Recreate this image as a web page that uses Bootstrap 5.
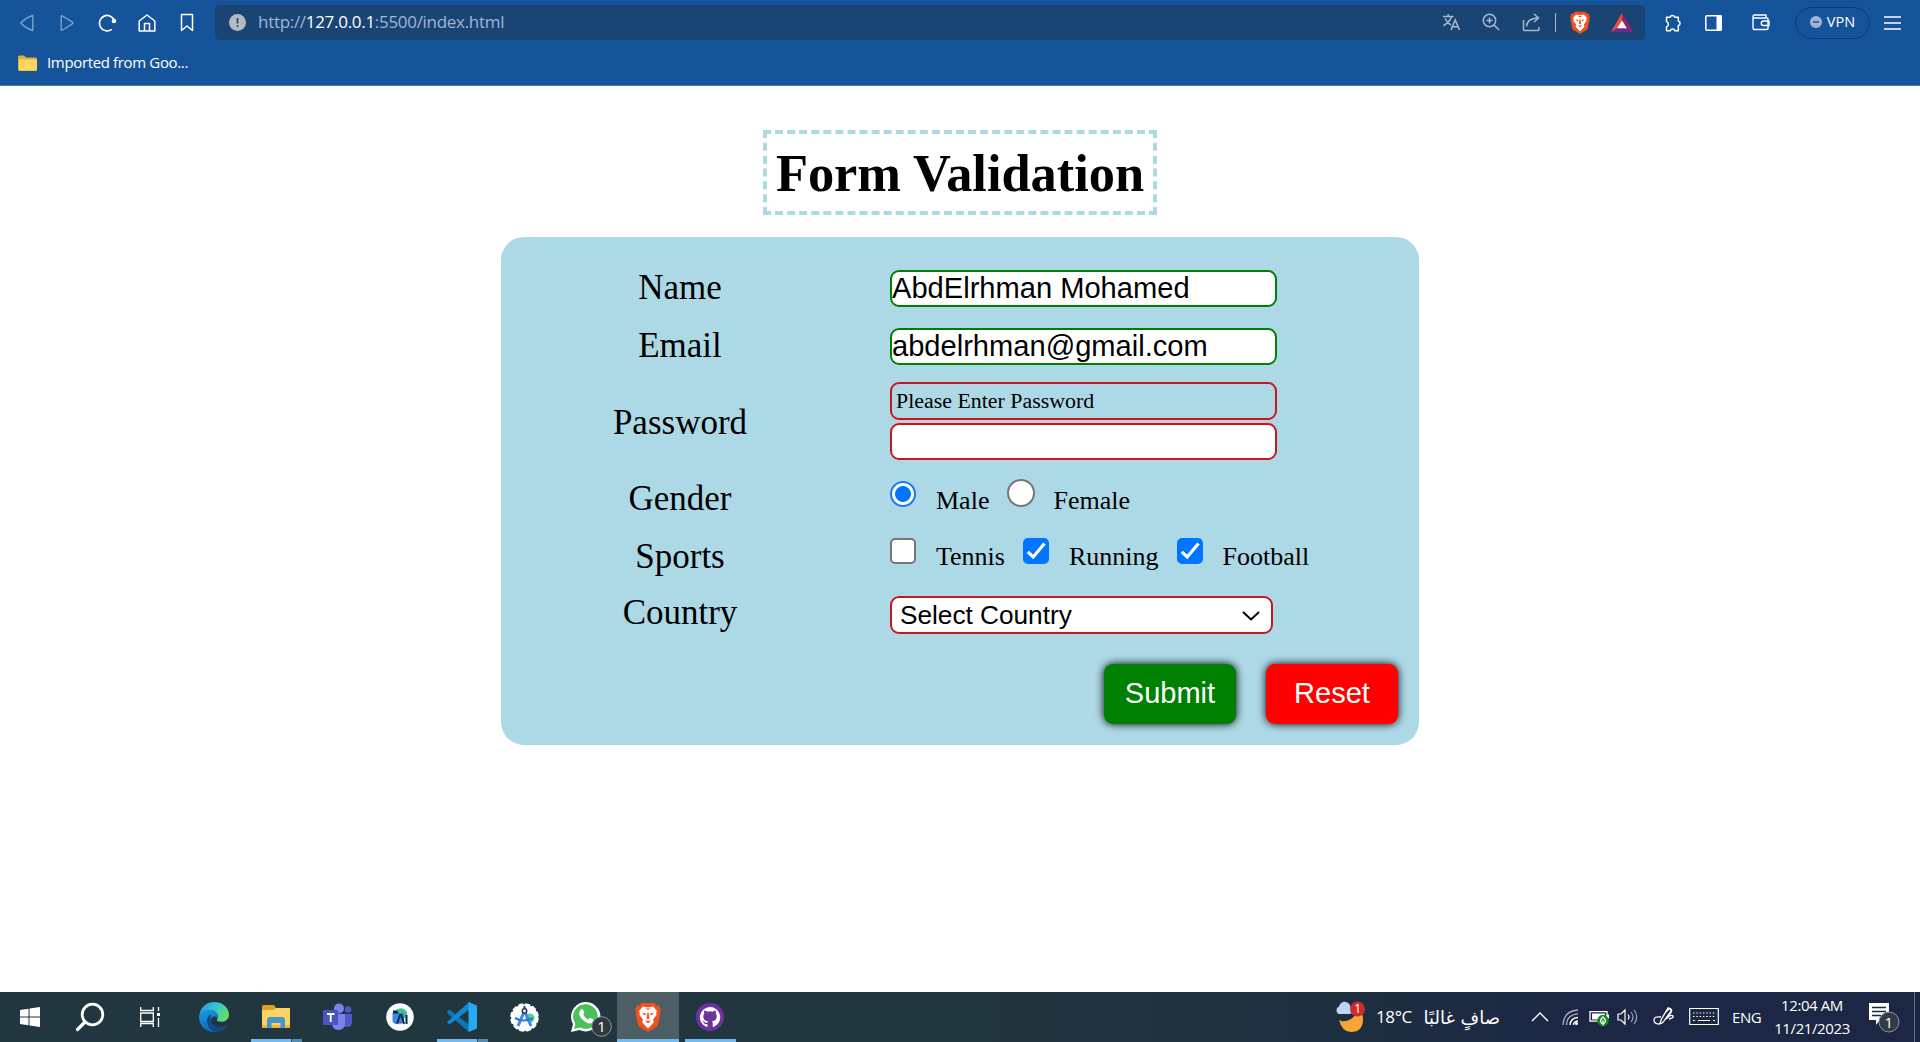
<!DOCTYPE html>
<html lang="en">
<head>
<meta charset="utf-8">
<title>Form Validation</title>
<link href="https://cdn.jsdelivr.net/npm/bootstrap@5.3.0/dist/css/bootstrap.min.css" rel="stylesheet">
<style>
  body { width: 1920px; height: 1042px; overflow: hidden; background: #fff; color: #000; font-family: "Open Sans", "Noto Sans", sans-serif; }
  svg { display: block; flex: none; }
  /* browser chrome */
  .chrome { height: 86px; background: #15539a; border-bottom: 1px solid #4a7cb5; color: #fff; flex: none; }
  .tools { height: 45px; padding-left: 7px; }
  .slot { width: 40px; flex: none; display: flex; justify-content: center; align-items: center; }
  .address { width: 1430px; height: 35px; margin: 0 8px 0 8px; background: #1a4474; border-radius: 5px; padding: 0 1px 1px 14px; flex: none; }
  .url { font-size: 17px; color: #9db7d6; margin-left: 12px; white-space: nowrap; letter-spacing: -.3px; line-height: 24px; }
  .url b { font-weight: 400; color: #fff; }
  .vpn { width: 75px; height: 32px; border: 1px solid #0d3d78; border-radius: 16px; margin-left: 14px; font-size: 14.5px; padding-bottom: 1px; flex: none; }
  .bookmarks { height: 35px; padding-left: 18px; font-size: 15px; }
  .bookmarks span { letter-spacing: -.35px; margin-left: 10px; }
  /* page */
  .page { flex: 1; font-family: "Liberation Serif", serif; }
  .page-title { margin: 44px 0 22px; height: 85px; width: 394px; border: 4px dashed #add8e6; font-size: 52.4px; font-weight: 700; line-height: 79px; text-align: center; white-space: nowrap; }
  .panel { width: 918px; height: 508px; background: #add8e6; border-radius: 23px; padding-top: 20px; }
  .line { height: 58px; }
  .line-tall { height: 95px; }
  .caption { width: 358px; font-size: 35px; margin-right: 31px; line-height: 40px; flex: none; }
  .field { width: 387px; height: 37px; border: 2px solid green; border-radius: 9px; padding: 0; font: 29.1px "Liberation Sans", sans-serif; color: #000; background: #fff; outline: 0; display: block; }
  .bad { border-color: #c8161d; }
  .notice { width: 387px; height: 38px; border: 2px solid #c8161d; border-radius: 9px; font-size: 21.900px; line-height: 34px; padding-left: 4px; margin-bottom: 3px; box-shadow: 0 2px 1px -1px #eebcc8; }
  .choices { font-size: 26px; line-height: 30px; }
  .choices label { margin: 0 18px 0 20px; }
  .choices input { appearance: none; width: 26px; height: 26px; margin: 0; border: 2px solid #767676; border-radius: 5px; background: #fff; flex: none; }
  .choices input[type=radio] { border-radius: 50%; }
  .choices input[type=radio]:checked { border-color: #1a78f0; background: radial-gradient(circle, #0075ff 7.500px, #fff 8.300px); }
  .choices input[type=checkbox]:checked { border-color: #0075ff; background: #0075ff url("data:image/svg+xml,%3csvg xmlns='http://www.w3.org/2000/svg' viewBox='0 0 26 26'%3e%3cpath fill='none' stroke='%23fff' stroke-width='3.200' d='M4.800 13.800l5.400 5.200L21.500 5.500'/%3e%3c/svg%3e") center / 26px 26px border-box; }
  .choices .over { width: 28px; height: 28px; margin-top: -1px; }
  .choices .over + label { margin-left: 18px; }
  .country { width: 383px; height: 38px; border: 2px solid #c8161d; border-radius: 9px; font: 26.2px "Liberation Sans", sans-serif; color: #000; padding: 0 0 0 8px; background-color: #fff; background-size: 18px 10px; background-position: right 11px top 13px;
    background-image: url("data:image/svg+xml,%3csvg xmlns='http://www.w3.org/2000/svg' viewBox='0 0 18 10'%3e%3cpath fill='none' stroke='%23000' stroke-width='2' d='M1 1l8 7.500 8-7.500'/%3e%3c/svg%3e"); }
  .act { width: 132px; height: 60px; border: 0; border-radius: 9px; font: 29px/58px "Liberation Sans", sans-serif; color: #fff; padding: 0 0 2px; box-shadow: 0 0 8px #000; }
  .go { background: green; }
  .clear { background: red; }
  /* taskbar */
  .taskbar { height: 50px; background: linear-gradient(90deg, #22363f 0%, #22363f 50%, #1e2f40 70%, #1b2744 82%, #1b2744 100%); color: #fff; flex: none; }
  .task { width: 62px; height: 50px; flex: none; display: flex; align-items: center; justify-content: center; position: relative; }
  .task.wide { width: 60px; }
  .task.on::after { content: ""; position: absolute; bottom: 0; left: 6px; width: 51px; height: 3px; background: #76b9ed; }
  .task.multi::after { background: linear-gradient(90deg, #76b9ed 40px, #3a5263 40px 41px, #5689af 41px); }
  .task.now { background: #4e5e65; }
  .task.now::after { left: 0; width: 62px; }
  .tray { font-size: 15px; letter-spacing: -.4px; }
  .clock { width: 84px; font-size: 15px; line-height: 23px; text-align: center; white-space: nowrap; }
  .arabic { font-family: "DejaVu Sans", sans-serif; font-size: 18px; letter-spacing: 0; white-space: nowrap; }
</style>
<script src="https://cdn.jsdelivr.net/npm/bootstrap@5.3.0/dist/js/bootstrap.bundle.min.js"></script>
</head>
<body class="d-flex flex-column">
<svg width="0" height="0" class="position-absolute">
  <symbol id="lion" viewBox="0 0 26 30">
    <path d="M6.500 1h13l2.500 2.600 2.200-.2L25.800 8l-.8 2.500.500 2-3 11.500L13 30 3.500 24 .5 12.500l.5-2L.2 8l1.600-4.600 2.200.2z" fill="#f1501f"/>
    <path d="M8 4.500l5 1 5-1 4 4.600-.8 2.200.3 1.700-3.500 4.600.8 3L13 26.500 7.200 20.600l.8-3L4.500 13l.3-1.700L4 9.100z" fill="#fff"/>
    <path d="M7 10.800l4 .8-1 2.200zM19 10.800l-4 .8 1 2.200zM10.500 18l2.500 1.200 2.500-1.200-1.500 3h-2zM12.200 11h1.600l.5 5.500-1.300.8-1.300-.8zM10 6.500h6l-3 1.500z" fill="#f1501f"/>
  </symbol>
</svg>

<header class="chrome">
  <div class="tools d-flex align-items-center">
    <span class="slot"><svg width="16" height="18" fill="none" stroke="#7ba3d2" stroke-width="1.400" stroke-linejoin="round"><path d="M13.800 1.500v15q-7-2-12-7.500 5-5.500 12-7.500z"/></svg></span>
    <span class="slot"><svg width="16" height="18" fill="none" stroke="#7ba3d2" stroke-width="1.400" stroke-linejoin="round"><path d="M2.200 2.500q0-1.200 1.200-.5l10 6.200q1 .8 0 1.600l-10 6.200q-1.200.7-1.200-.5z"/></svg></span>
    <span class="slot"><svg width="20" height="20" fill="none" stroke="#fff" stroke-width="1.700"><path d="M14.800 16.300A7.700 7.700 0 1 1 17.500 8"/><circle cx="17" cy="8" r="2.300" fill="#fff" stroke="none"/></svg></span>
    <span class="slot"><svg width="18" height="18" fill="none" stroke="#fff" stroke-width="1.500" stroke-linejoin="round"><path d="M1.200 7L9 1l7.800 6v10H1.200zM6.500 17V9.500h5V17"/></svg></span>
    <span class="slot"><svg width="14" height="19" fill="none" stroke="#fff" stroke-width="1.500" stroke-linejoin="round"><path d="M1.500 1.500h11v16L7 13l-5.500 4.500z"/></svg></span>
    <div class="address d-flex align-items-center">
      <svg width="17" height="17"><circle cx="8.500" cy="8.500" r="8.500" fill="#b1bac5"/><path d="M8.500 4v5.500M8.500 11.200v1.700" stroke="#1a4474" stroke-width="1.700"/></svg>
      <span class="url">http://<b>127.0.0.1</b>:5500/index.html</span>
      <span class="slot ms-auto"><svg width="19" height="18" fill="none" stroke="#a9b9ce" stroke-width="1.500"><path d="M1 3.500h10.500M6.200 1v2.500M9.500 3.500Q8 9 1.500 12.500M3 5.500Q5 9.500 9 12M9 17l4.200-10 4.300 10M10.500 13.700h5.500"/></svg></span>
      <span class="slot"><svg width="18" height="18" fill="none" stroke="#a9b9ce" stroke-width="1.500"><circle cx="7.500" cy="7.500" r="6.200"/><path d="M12 12l5 5M4.500 7.500h6M7.500 4.500v6"/></svg></span>
      <span class="slot"><svg width="19" height="19" fill="none" stroke="#a9b9ce" stroke-width="1.500"><path d="M1.500 7v9.500q0 1 1 1H16q1 0 1-1V14M4.500 13.500Q5 5.500 15.500 5M12 1l4.500 4-4.500 4"/></svg></span>
      <span class="slot" style="width:8px"><svg width="1" height="19"><path d="M.5 0v19" stroke="#a9b9ce"/></svg></span>
      <span class="slot" style="width:41px"><svg width="20" height="23"><use href="#lion"/></svg></span>
      <span class="slot" style="width:44px"><svg width="22" height="19" viewBox="0 0 22 19"><path d="M11 0L0 19l11-6z" fill="#ee4f37"/><path d="M11 0l11 19-11-6z" fill="#9e1f63"/><path d="M0 19h22l-11-6.500z" fill="#662d91"/><path d="M11 7.500l4.800 7.800H6.200z" fill="#fff"/></svg></span>
    </div>
    <span class="slot"><svg width="18" height="18" viewBox="0 0 18 18" fill="none" stroke="#fff" stroke-width="1.500" stroke-linejoin="round"><path d="M2.500 3.200h3.700a2.300 2.300 0 0 1 4.500 0h3.600v3.900a2.250 2.250 0 0 1 0 4.400V16.800h-3.500a2.300 2.300 0 0 0-4.500 0H2.500v-3.900a2.800 2.800 0 0 0 0-5.300z"/></svg></span>
    <span class="slot"><svg width="17" height="16"><rect x=".8" y=".8" width="15.400" height="14.400" rx="1" fill="none" stroke="#fff" stroke-width="1.500"/><path d="M11.500 0h4q1.500 0 1.500 1.500v13q0 1.500-1.500 1.500h-4z" fill="#fff"/></svg></span>
    <span class="slot ms-2"><svg width="18" height="17" fill="none" stroke="#fff" stroke-width="1.400" stroke-linejoin="round"><path d="M1 2.700v11.300q0 1.500 1.500 1.500h12.500q1 0 1-1V5q0-1-1-1H2.500Q1 4 1 2.700 1 1 2.500 1H14v3M17 7h-5.500a2.200 2.200 0 0 0 0 4.500H17z"/></svg></span>
    <span class="vpn d-flex align-items-center justify-content-center"><svg width="12" height="12" style="margin-right:5px"><circle cx="6" cy="6" r="6" fill="#a6b2d4"/><path d="M3 6h6" stroke="#15539a" stroke-width="1.500"/></svg>VPN</span>
    <span class="slot" style="width:45px"><svg width="17" height="14" stroke="#fff" stroke-width="1.500"><path d="M0 1h17M0 7h17M0 13h17"/></svg></span>
  </div>
  <div class="bookmarks d-flex align-items-center">
    <svg width="19" height="16"><path d="M0 2q0-1.500 1.500-1.500H6L8 2.500h9.500Q19 2.500 19 4v10.500q0 1.500-1.500 1.500h-16Q0 16 0 14.500z" fill="#e5ad35"/><path d="M1 4.500h18v9.500q0 1.500-1.500 1.500h-15Q1 15.500 1 14z" fill="#ffd75e"/></svg>
    <span>Imported from Goo...</span>
  </div>
</header>

<main class="page d-flex flex-column align-items-center">
  <h1 class="page-title">Form Validation</h1>
  <form class="panel" autocomplete="off">
    <div class="line d-flex">
      <div class="caption text-center align-self-center pt-1">Name</div>
      <input class="field mt-auto mb-2" type="text" value="AbdElrhman Mohamed" aria-label="Name">
    </div>
    <div class="line d-flex">
      <div class="caption text-center align-self-center pt-1">Email</div>
      <input class="field mt-auto mb-2" type="text" value="abdelrhman@gmail.com" aria-label="Email">
    </div>
    <div class="line-tall d-flex">
      <div class="caption text-center align-self-center pt-1">Password</div>
      <div class="d-flex flex-column justify-content-end pb-2">
        <div class="notice">Please Enter Password</div>
        <input class="field bad" type="password" aria-label="Password">
      </div>
    </div>
    <div class="line d-flex">
      <div class="caption text-center align-self-center pt-1">Gender</div>
      <div class="choices d-flex pt-2 mt-1">
        <input type="radio" name="g" id="m" class="mt-1" style="margin-top:1px!important" checked><label for="m" class="pt-2" style="padding-top:6px!important">Male</label>
        <input type="radio" name="g" id="f" class="over"><label for="f" style="padding-top:6px">Female</label>
      </div>
    </div>
    <div class="line d-flex">
      <div class="caption text-center align-self-center pt-1">Sports</div>
      <div class="choices d-flex pt-2 mt-1">
        <input type="checkbox" id="t"><label for="t" class="pt-1">Tennis</label>
        <input type="checkbox" id="r" checked><label for="r" class="pt-1">Running</label>
        <input type="checkbox" id="b" checked><label for="b" class="pt-1">Football</label>
      </div>
    </div>
    <div class="line d-flex">
      <div class="caption text-center align-self-center">Country</div>
      <select class="form-select country mt-auto mb-2" aria-label="Country"><option>Select Country</option></select>
    </div>
    <div class="d-flex justify-content-end" style="gap:30px;padding:22px 21px 0 0">
      <button type="button" class="btn act go">Submit</button>
      <button type="button" class="btn act clear">Reset</button>
    </div>
  </form>
</main>

<footer class="taskbar d-flex">
  <span class="task wide"><svg width="20" height="20" fill="#fff"><path d="M0 3l8.500-1.200v7.700H0zM9.500 1.600L20 0v9.500H9.500zM0 10.500h8.500v7.700L0 17zM9.500 10.500H20V20L9.500 18.400z"/></svg></span>
  <span class="task wide"><svg width="30" height="30" fill="none" stroke="#fff" stroke-width="2.800" stroke-linecap="round"><circle cx="17.500" cy="12.500" r="10.300"/><path d="M10 20l-7.500 7.500" stroke-width="3.200"/></svg></span>
  <span class="task wide" style="margin-right:3px"><svg width="20" height="20" fill="none" stroke="#fff" stroke-width="1.300"><path d="M.7 0v3.500h12.600V0M.7 6h12.600v8.500H.7zM.7 20v-3.500h12.600V20M18.500 0v4M18.500 11v9"/><path d="M17 6h3v3h-3z" fill="#fff" stroke="none"/></svg></span>
  <span class="task"><svg width="30" height="30" viewBox="0 0 30 30">
    <defs><linearGradient id="e1" x1="0" x2="1" y1=".2" y2=".5"><stop stop-color="#229de0"/><stop offset=".55" stop-color="#36c6d2"/><stop offset="1" stop-color="#65e05b"/></linearGradient><linearGradient id="e2" x1="0" x2=".5" y1="0" y2="1"><stop stop-color="#1b9de2"/><stop offset="1" stop-color="#1160b6"/></linearGradient></defs>
    <path d="M.5 12C2 4.500 8 0 15 0c9 0 15 6.200 15 12.500 0 4.500-3.500 7.300-7.500 7.300-3.200 0-5.200-1.100-4.500-2.200 3-4.600-1.500-9.600-7-9.600C6 8 2 10 .5 12z" fill="url(#e1)"/>
    <path d="M0 15C0 10 5 7.500 9.500 7.800c6 0 10 4 8.800 8.500-1-2.300-4.300-2.800-6 .2-2 4 2 10 8 9.500 3-.2 5-1 7-2.300.6-.3 1 .1.700.6C25 28 20.500 30 15 30 6.500 30 0 23.500 0 15z" fill="url(#e2)"/>
    <path d="M11 12.500c-6 5.500-2 14.500 4.500 17.400C21 29.800 25.500 27.500 28 24c.3-.4-.2-.7-.7-.4C18 28 9 21.500 12 14z" fill="#114a8b"/></svg></span>
  <span class="task on multi"><svg width="28" height="24"><path d="M0 1.500Q0 0 1.500 0H12l2 3h13v4H0z" fill="#dfa01d"/><path d="M0 5h12l2-2h14v20H0z" fill="#fdd363"/><path d="M0 20h28v3H0z" fill="#efb937"/><path d="M5 23v-8q0-3 3-3h12q3 0 3 3v8h-4.500v-5h-9v5z" fill="#4098cf"/></svg></span>
  <span class="task"><svg width="30" height="28"><circle cx="16" cy="5.500" r="5" fill="#7b83eb"/><circle cx="25" cy="6.500" r="3.200" fill="#5059c9"/><path d="M20 11h9v8q0 5-5 5h-4z" fill="#5059c9"/><path d="M9 11h13v9q0 7-6.500 7T9 20z" fill="#7b83eb"/><rect y="7" width="15" height="15" rx="1" fill="#4b53bc"/><path d="M4 11h7.500M7.700 11v8" stroke="#fff" stroke-width="1.800"/></svg></span>
  <span class="task"><svg width="28" height="28"><circle cx="14" cy="14" r="13.800" fill="#f8fbfd"/><path d="M9 8q4-4 9-2l3 3v6H9z" fill="#38c788"/><path d="M6.500 10H18v10H9q-2.500 0-2.500-2.500z" fill="#3e85ee"/><path d="M7 7.500h4l2 3H7z" fill="#0a2c40"/><path d="M11 21l3-9h1.500l2.500 9M20.500 12v9" fill="none" stroke="#092c42" stroke-width="2"/><path d="M8 20h8" stroke="#265ca6"/></svg></span>
  <span class="task on multi"><svg width="30" height="30"><path d="M0 9.500l2.500-2L22 22.500V30L1 12z" fill="#0876bd"/><path d="M0 20l22-20v7.500L2.500 22.500 0 20.500z" fill="#1687cf"/><path d="M21.500 0L30 3.500v23L21.500 30z" fill="#28a8ef"/></svg></span>
  <span class="task"><svg width="29" height="29"><circle cx="14.500" cy="14.500" r="13.300" fill="#fff" stroke="#fff" stroke-width="2" stroke-dasharray="5 2"/><circle cx="20" cy="15" r="4.500" fill="#3ddc84"/><path d="M8 23l6-14M21 23L15 9" stroke="#4285f4" stroke-width="3"/><path d="M5 15q8 5 18 0" fill="none" stroke="#3674d6" stroke-width="2.200"/><circle cx="14.500" cy="8" r="2.200" fill="#fff" stroke="#263b49" stroke-width="1.600"/><path d="M14.500 3v3" stroke="#263b49" stroke-width="2"/></svg></span>
  <span class="task"><svg width="30" height="30"><path d="M0 30l2-8A14.700 14.700 0 1 1 8.500 28z" fill="#fff"/><path d="M3 27l1.400-5.300A12.300 12.300 0 1 1 9 25.600z" fill="#48c158"/><path d="M10 7.500c.7-.7 1.500-.7 2 0l1.300 3c.3.600-1 1.600-1 2.200 1 2.200 3 4 5 4.800.7 0 1.400-1.900 2.200-1.600l3 1.500c.6.300.2 2-.5 2.800-1.500 1.400-3.700 1.500-6 .6C12 19.100 8.500 14.600 8.200 12c-.1-1.800.8-3.500 1.800-4.500z" fill="#fff"/></svg>
    <svg class="position-absolute" style="left:36px;top:24px" width="21" height="21"><circle cx="10.500" cy="10.500" r="9.800" fill="#303a3c" stroke="#929b9f"/><text x="10.500" y="16" text-anchor="middle" font-size="15" fill="#fff">1</text></svg></span>
  <span class="task on now"><svg width="26" height="30"><use href="#lion"/></svg></span>
  <span class="task on"><svg width="28" height="28"><circle cx="14" cy="14" r="14" fill="#6e329e"/><path d="M14 4A10.300 10.300 0 0 0 10.700 24c.6.100.7-.3.700-.6v-2.300c-3 .6-3.600-1.300-3.600-1.300-.5-1.200-1.200-1.500-1.200-1.500-.9-.7.1-.6.1-.6 1 0 1.600 1 1.600 1 1 1.600 2.500 1.100 3.100.9.100-.7.400-1.200.7-1.400-2.400-.3-4.800-1.200-4.800-5 0-1.200.4-2.100 1-2.800-.1-.3-.4-1.400.1-2.800 0 0 .9-.3 2.900 1.100a10 10 0 0 1 5.400 0c2-1.400 2.900-1.100 2.900-1.100.5 1.400.2 2.500.1 2.800.7.700 1 1.600 1 2.800 0 3.800-2.400 4.700-4.700 4.900.4.400.7 1 .7 2v3.300c0 .3.200.7.700.6A10.300 10.300 0 0 0 14 4z" fill="#fff"/></svg></span>

  <div class="tray ms-auto d-flex align-items-center">
    <svg width="30" height="32"><path d="M4 19q5 3 12-1 6-4 6-10 6 3 6 10 0 13-12 13Q7 31 4 19z" fill="#f7a636"/><path d="M4 13a4 4 0 0 1 0-7.500Q6 0 11 1q4 1 4.500 5 3.500 1 2.500 4-1 3-4 3z" fill="#bcd4f5"/><circle cx="22.500" cy="8" r="7.500" fill="#cf2c28"/><text x="22.500" y="12.200" text-anchor="middle" font-size="12" fill="#fff">1</text></svg>
    <span style="width:48px;margin-left:11px;font-size:17px">18°C</span>
    <span class="arabic" dir="rtl" style="width:76px">صافٍ غالبًا</span>
    <svg style="margin-left:31px" width="18" height="10" fill="none" stroke="#fff" stroke-width="1.400"><path d="M1 9l8-8 8 8"/></svg>
    <svg style="margin-left:13px" width="17" height="17" fill="none" stroke="#fff" stroke-width="1.300"><g stroke="#a9b1bf"><path d="M1 16Q1.500 2 16 1M4.500 16Q5 5.500 16 4.800"/></g><path d="M8 16q.5-7 8-7.500M11.500 16q0-3.500 4.500-4"/><circle cx="14.500" cy="14.500" r="1.500" fill="#fff" stroke="none"/></svg>
    <svg style="margin-left:10px" width="22" height="19"><path d="M1 3.700h17v9.500H1z" fill="none" stroke="#fff" stroke-width="1.300"/><path d="M3 5.500h13v6H3zM18 6.500h2v4h-2z" fill="#fff"/><circle cx="14" cy="12.500" r="5.700" fill="#128a22"/><path d="M14 9q5 4.500 0 7-5-2.500 0-7zM14 12v5.500" fill="none" stroke="#fff" stroke-width="1.200"/></svg>
    <svg style="margin-left:6px" width="22" height="18" fill="none" stroke="#fff" stroke-width="1.200"><path d="M1 6h3l4-4v14l-4-4H1zM11 6.500q2 2.500 0 5"/><path d="M14 4q4 5 0 10M17 2q5.500 7 0 14" stroke="#9aa4b5"/></svg>
    <svg style="margin-left:14px" width="22" height="20" fill="none" stroke="#fff" stroke-width="1.300"><path d="M8 10Q1 9 1 13t5 4q3 0 5-3l7-10q0-3-3-3L8 13l-1 4M13 5q3-4 5-3 2 2-2 6l-3 4q5-5 7-3 1 2-4 3"/></svg>
    <svg style="margin-left:14px" width="30" height="20" fill="none" stroke="#fff" stroke-width="1.200"><path d="M.7 1.500h28.600v16H.7z"/><path d="M4 6h23M4 9.500h23" stroke-dasharray="1.500 1.800"/><path d="M4 13.500h2M9 13.500h12M24 13.500h2"/></svg>
    <span style="width:38px;margin-left:13px;font-size:15px">ENG</span>
    <div class="clock">12:04 AM<br>11/21/2023</div>
    <svg style="margin-left:14px" width="34" height="34"><path d="M1 3h20v17h-9l-4 5v-5H1z" fill="#fff"/><path d="M4 7.500h14M4 11.500h14M4 15.500h9" stroke="#1b2744" stroke-width="1.300"/><circle cx="21" cy="22" r="10" fill="#343b47" stroke="#89909d"/><text x="20.500" y="27.500" text-anchor="middle" font-size="15" fill="#fff">1</text></svg>
    <svg style="margin-left:12px;margin-right:5px" width="1" height="50"><path d="M.5 0v50" stroke="#687184"/></svg>
  </div>
</footer>
</body>
</html>
